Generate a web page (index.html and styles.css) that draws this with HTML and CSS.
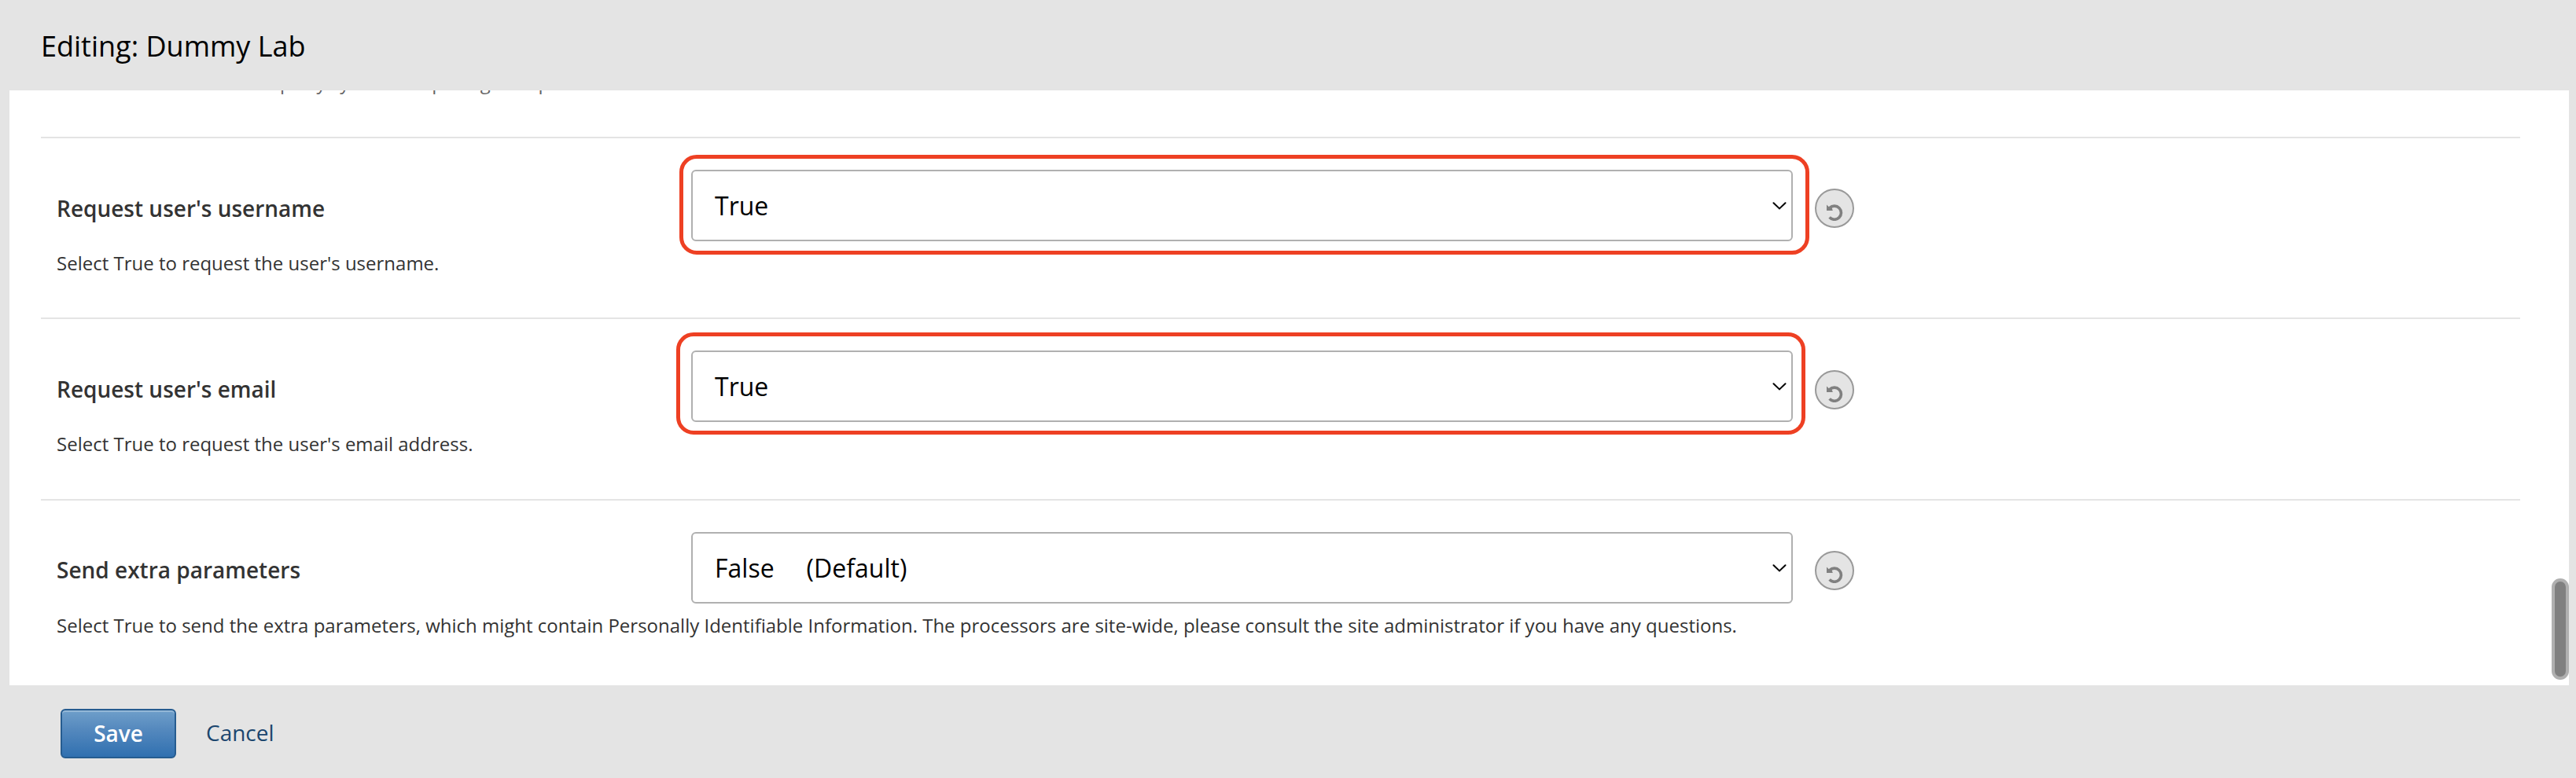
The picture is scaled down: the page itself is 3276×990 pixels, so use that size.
FILE: index.html
```html
<!DOCTYPE html>
<html lang="en">
<head>
<meta charset="utf-8">
<title>Editing: Dummy Lab</title>
<link rel="stylesheet" href="styles.css">
</head>
<body>
<svg class="sprite" aria-hidden="true">
  <symbol id="chevron" viewBox="0 0 18 10"><path d="M1.5 1.2 9 8.4 16.5 1.2" fill="none" stroke="#000" stroke-width="2" stroke-linecap="round"/></symbol>
  <symbol id="undo" viewBox="0 0 22 22"><path d="M4.8 5.6A8.6 8.6 0 1 1 4.6 17.6" fill="none" stroke="#808080" stroke-width="3.6"/><path d="M1 1.6 3.6 4 7.5 5.2 8.8 9H1Z" fill="#808080"/></symbol>
</svg>
<header class="header"><h1 class="title">Editing: Dummy Lab</h1></header>
<main class="panel">
  <p class="clipped"><span>Select True to use in third party systems</span><span>exposing</span><span>their p</span></p>
  <section class="row">
    <div class="line">
      <label class="label">Request user's username</label>
      <div class="select">True<svg class="chevron"><use href="#chevron"/></svg><span class="mark mark-first"></span></div>
      <button class="reset" aria-label="Reset"><svg class="undo"><use href="#undo"/></svg></button>
    </div>
    <p class="help">Select True to request the user's username.</p>
  </section>
  <section class="row">
    <div class="line">
      <label class="label">Request user's email</label>
      <div class="select">True<svg class="chevron"><use href="#chevron"/></svg><span class="mark mark-second"></span></div>
      <button class="reset reset-low" aria-label="Reset"><svg class="undo"><use href="#undo"/></svg></button>
    </div>
    <p class="help">Select True to request the user's email address.</p>
  </section>
  <section class="row row-last">
    <div class="line">
      <label class="label">Send extra parameters</label>
      <div class="select">False<span class="default">(Default)</span><svg class="chevron"><use href="#chevron"/></svg></div>
      <button class="reset" aria-label="Reset"><svg class="undo"><use href="#undo"/></svg></button>
    </div>
    <p class="help">Select True to send the extra parameters, which might contain Personally Identifiable Information. The processors are site-wide, please consult the site administrator if you have any questions.</p>
  </section>
  <span class="thumb"></span>
</main>
<footer class="footer"><button class="save">Save</button><a class="cancel">Cancel</a></footer>
</body>
</html>
```
FILE: styles.css
```css
* { box-sizing: border-box; }
body {
  margin: 0;
  height: 990px;
  display: flex;
  flex-direction: column;
  overflow: hidden;
  background: #e4e4e4;
  font-family: "Open Sans", sans-serif;
  color: #333;
}
.sprite { display: none; }
.header { flex: none; height: 115px; padding: 34px 52px 0; }
.title { margin: 0; font-size: 36px; line-height: 49px; font-weight: 400; color: #000; }
.panel {
  position: relative;
  flex: none;
  height: 757px;
  margin: 0 9px 0 12px;
  padding: 0 62px 0 40px;
  overflow: hidden;
  background: #fff;
}
.clipped { display: flex; margin: -27px 0 0 12px; height: 86px; font-size: 24px; line-height: 33px; color: #666; white-space: nowrap; }
.clipped span + span { margin-left: 12px; }
.clipped span:last-child { margin-left: 2px; }
.row { height: 230px; border-top: 2px solid #e4e4e4; padding: 40px 20px 0; }
.row + .row { height: 231px; }
.line { display: flex; align-items: flex-start; height: 91px; }
.label { width: 807px; padding-top: 30px; font-size: 28px; line-height: 38px; font-weight: 600; }
.row-last .label { padding-top: 29px; }
.select {
  position: relative;
  display: flex;
  align-items: center;
  width: 1401px;
  height: 91px;
  padding: 0 6px 0 28px;
  border: 2px solid #b0b0b0;
  border-radius: 6px;
  font-size: 32px;
  color: #000;
  background: #fff;
}
.default { margin-left: 41px; }
.chevron { width: 18px; height: 10px; margin-left: auto; }
.mark { position: absolute; border: 5px solid #ee4023; border-radius: 22px; }
.mark-first { left: -17px; right: -22.5px; top: -21px; bottom: -19px; }
.mark-second { left: -21px; right: -18px; top: -25px; bottom: -18px; }
.reset {
  display: grid;
  place-items: center;
  width: 50px;
  height: 50px;
  margin: 24px 0 0 28px;
  padding: 10px 0 0;
  border: 2px solid #999;
  border-radius: 50%;
  background: #e4e4e4;
}
.reset-low { margin-top: 25px; }
.undo { width: 22px; height: 22px; }
.help { margin: 11px 0 0; font-size: 24px; line-height: 33px; white-space: nowrap; }
.thumb {
  position: absolute;
  right: 0;
  top: 621px;
  width: 22px;
  height: 129px;
  border: 4px solid #b0b0b0;
  border-radius: 11px;
  background: #808080;
}
.footer { flex: none; display: flex; align-items: flex-start; gap: 38px; height: 118px; padding: 30px 77px 0; }
.save {
  width: 147px;
  height: 63px;
  padding: 0 0 2px;
  border: 2px solid #265c90;
  border-radius: 6px;
  background: linear-gradient(#6f9fca, #5589be 40%, #3070b0);
  box-shadow: inset 0 2px #93b7d7;
  color: #fff;
  font: 600 28px/38px "Open Sans", sans-serif;
}
.cancel { padding-top: 11px; font-size: 28px; line-height: 38px; color: #1b466e; }
```
